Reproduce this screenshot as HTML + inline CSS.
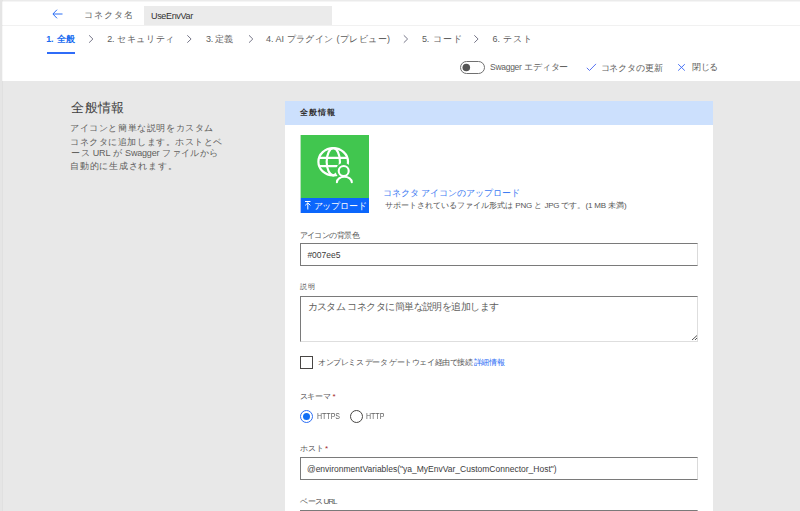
<!DOCTYPE html>
<html><head><meta charset="utf-8">
<style>
*{margin:0;padding:0;box-sizing:border-box}
html,body{width:800px;height:511px;overflow:hidden;background:#fff}
body{font-family:"Liberation Sans",sans-serif;position:relative;color:#323130}
.a{position:absolute;white-space:nowrap;line-height:1}
.inp{border:1px solid #7a7a7a;border-right-color:#dadada;background:#fff}
.ta{border:1px solid #7a7a7a;border-right-color:#dedede;border-bottom-color:#dedede;background:#fff}
</style></head><body>
<div class="a" style="left:0;top:0;width:800px;height:1px;background:#ebebeb"></div>
<div class="a" style="left:0;top:1px;width:800px;height:1px;background:#f5f5f5"></div>
<div class="a" style="left:2px;top:25px;width:798px;height:1px;background:#f1f1f1"></div>
<div class="a" style="left:2px;top:81px;width:798px;height:430px;background:#e8e8e8"></div>
<div class="a" style="left:0;top:0;width:2px;height:511px;background:#e5e5e5"></div>
<div class="a" style="left:2px;top:0;width:1px;height:511px;background:rgba(0,0,0,0.03)"></div>
<svg class="a" style="left:52px;top:9px" width="11" height="10" viewBox="0 0 11 10"><path d="M10.5 5H1M5 0.7L0.9 5 5 9.3" fill="none" stroke="#2b6ef5" stroke-width="1"/></svg>
<div class="a" style="left:144px;top:6px;width:188px;height:19px;background:#ebebeb"></div>
<div class="a" style="left:47px;top:52px;width:28px;height:2px;background:#2f6cf8"></div>
<svg class="a" style="left:0;top:0" width="800" height="60" viewBox="0 0 800 60"><path d="M89.10 35.3L92.90 39L89.10 42.7" fill="none" stroke="#66667a" stroke-width="0.9"/><path d="M187.30 35.3L191.10 39L187.30 42.7" fill="none" stroke="#66667a" stroke-width="0.9"/><path d="M249.00 35.3L252.80 39L249.00 42.7" fill="none" stroke="#66667a" stroke-width="0.9"/><path d="M403.80 35.3L407.60 39L403.80 42.7" fill="none" stroke="#66667a" stroke-width="0.9"/><path d="M474.30 35.3L478.10 39L474.30 42.7" fill="none" stroke="#66667a" stroke-width="0.9"/></svg>



<div class="a" style="left:285px;top:101px;width:428px;height:410px;background:#fff"></div>
<div class="a" style="left:285px;top:101px;width:428px;height:24px;background:#cce0fd"></div>
<div class="a" style="left:300px;top:135px;width:69px;height:63px;background:#41c64f"></div><div class="a" style="left:300px;top:135px;width:1px;height:63px;background:#b5e3b9"></div>
<svg class="a" style="left:310px;top:140px" width="50" height="50" viewBox="0 0 50 50">
<defs><mask id="m"><rect width="50" height="50" fill="#fff"/><circle cx="33.7" cy="31" r="8"/><ellipse cx="34.3" cy="43" rx="10.5" ry="8.5"/></mask></defs>
<g fill="none" stroke="#fff" stroke-width="2.2" mask="url(#m)">
<ellipse cx="23.2" cy="21.75" rx="14.8" ry="13.55"/>
<ellipse cx="23.3" cy="21.75" rx="6.65" ry="13.55"/>
<path d="M9 17.8H37.5M9 26.2H37.5"/>
</g>
<g fill="none" stroke="#fff" stroke-width="2.1" stroke-linecap="round">
<circle cx="33.7" cy="31" r="5"/>
<path d="M26.9 42.2A7.45 5.5 0 0 1 41.8 42.2"/>
</g>
</svg>
<div class="a" style="left:300px;top:198px;width:69px;height:15px;background:#0b66fc"></div><div class="a" style="left:300px;top:198px;width:1px;height:15px;background:#b3c3f5"></div>
<svg class="a" style="left:304px;top:200px" width="8" height="11" viewBox="0 0 8 11"><path d="M1 1.5H6.5M3.8 2.8V9.5M1.2 5.4L3.8 2.8 6.4 5.4" fill="none" stroke="#fff" stroke-width="1"/></svg>
<div class="a inp" style="left:300px;top:243px;width:398px;height:23px"></div>
<div class="a ta" style="left:300px;top:296px;width:398px;height:46px"></div>
<svg class="a" style="left:690px;top:334px" width="8" height="7" viewBox="0 0 8 7"><path d="M2 6L7 1.5M5 6L7 4" fill="none" stroke="#555" stroke-width="1"/></svg>
<div class="a" style="left:300px;top:356px;width:13px;height:13px;border:1px solid #484644"></div>
<div class="a" style="left:300px;top:410px;width:13px;height:13px;border:1px solid #2b6ef5;border-radius:50%"></div>
<div class="a" style="left:303px;top:413px;width:7px;height:7px;border-radius:50%;background:#106ef5"></div>
<div class="a" style="left:350px;top:410px;width:13px;height:13px;border:1px solid #484644;border-radius:50%"></div>
<div class="a inp" style="left:300px;top:457px;width:398px;height:23px"></div>
<div class="a inp" style="left:300px;top:510px;width:398px;height:23px"></div>
<svg class="a" style="left:0;top:0" width="800" height="80" viewBox="0 0 800 80">
<rect x="460.5" y="61.5" width="24" height="12" rx="6" fill="none" stroke="#707070" stroke-width="1"/>
<circle cx="466.3" cy="67.5" r="3.8" fill="#555"/>
<path d="M586.8 67.8L589.5 70.5 596 63.9" fill="none" stroke="#4f6cf2" stroke-width="0.95"/>
<path d="M678.2 64.2L684.8 70.6M684.8 64.2L678.2 70.6" fill="none" stroke="#3f6cf5" stroke-width="0.95"/>
</svg>

<div class="a" id="cname" style="left:84.00px;top:11.45px;font-size:9px;color:#605e5c;letter-spacing:-0.200px;width:48.50px;text-align:justify;text-align-last:justify">コネクタ名</div>
<div class="a" id="useenv" style="left:151.00px;top:12.00px;font-size:9px;color:#323130;letter-spacing:-0.332px">UseEnvVar</div>
<div class="a" id="tab1" style="left:46.20px;top:35.25px;font-size:9px;color:#1a6cf0;letter-spacing:-0.200px;width:28.90px;text-align:justify;text-align-last:justify;font-weight:bold">1. 全般</div>
<div class="a" id="tab2" style="left:107.20px;top:34.75px;font-size:9px;color:#5c5c5c;letter-spacing:-0.200px;width:66.70px;text-align:justify;text-align-last:justify">2. セキュリティ</div>
<div class="a" id="tab3" style="left:206.00px;top:34.75px;font-size:9px;color:#5c5c5c;letter-spacing:-0.200px;width:27.10px;text-align:justify;text-align-last:justify">3. 定義</div>
<div class="a" id="tab4" style="left:266.10px;top:34.75px;font-size:9px;color:#5c5c5c;letter-spacing:-0.200px;width:123.70px;text-align:justify;text-align-last:justify">4. AI プラグイン (プレビュー)</div>
<div class="a" id="tab5" style="left:421.90px;top:34.75px;font-size:9px;color:#5c5c5c;letter-spacing:-0.200px;width:39.50px;text-align:justify;text-align-last:justify">5. コード</div>
<div class="a" id="tab6" style="left:492.60px;top:34.75px;font-size:9px;color:#5c5c5c;letter-spacing:-0.200px;width:39.10px;text-align:justify;text-align-last:justify">6. テスト</div>
<div class="a" id="swag" style="left:490.10px;top:62.50px;font-size:8.5px;color:#605e5c;letter-spacing:-0.300px;width:78.10px;text-align:justify;text-align-last:justify">Swagger エディター</div>
<div class="a" id="upd" style="left:600.50px;top:63.50px;font-size:9px;color:#605e5c;letter-spacing:-0.200px;width:62.10px;text-align:justify;text-align-last:justify">コネクタの更新</div>
<div class="a" id="close" style="left:692.00px;top:62.50px;font-size:9px;color:#605e5c;letter-spacing:-0.500px;width:25.70px;text-align:justify;text-align-last:justify">閉じる</div>
<div class="a" id="head" style="left:71.10px;top:101.05px;font-size:13px;color:#3f3f3f;letter-spacing:-0.200px;width:53.10px;text-align:justify;text-align-last:justify">全般情報</div>
<div class="a" id="p1" style="left:70.10px;top:124.05px;font-size:9px;color:#605e5c;letter-spacing:-0.200px;width:143.10px;text-align:justify;text-align-last:justify">アイコンと簡単な説明をカスタム</div>
<div class="a" id="p2" style="left:70.10px;top:137.75px;font-size:9px;color:#605e5c;letter-spacing:-0.200px;width:152.10px;text-align:justify;text-align-last:justify">コネクタに追加します。ホストとベ</div>
<div class="a" id="p3" style="left:71.10px;top:149.35px;font-size:9px;color:#605e5c;letter-spacing:-0.200px;width:146.90px;text-align:justify;text-align-last:justify">ース URL が Swagger ファイルから</div>
<div class="a" id="p4" style="left:70.10px;top:162.30px;font-size:9px;color:#605e5c;letter-spacing:-0.200px;width:106.30px;text-align:justify;text-align-last:justify">自動的に生成されます。</div>
<div class="a" id="chead" style="left:299.70px;top:109.45px;font-size:8px;color:#323130;letter-spacing:0.000px;width:35.50px;text-align:justify;text-align-last:justify;font-weight:bold">全般情報</div>
<div class="a" id="upl" style="left:313.50px;top:201.50px;font-size:9px;color:#fff;letter-spacing:-0.200px;width:53.50px;text-align:justify;text-align-last:justify">アップロード</div>
<div class="a" id="link" style="left:383.40px;top:189.25px;font-size:8.5px;color:#3a78f2;letter-spacing:-0.350px;width:135.90px;text-align:justify;text-align-last:justify">コネクタ アイコンのアップロード</div>
<div class="a" id="ftype" style="left:385.00px;top:201.95px;font-size:8px;color:#565656;letter-spacing:-0.250px;width:241.50px;text-align:justify;text-align-last:justify">サポートされているファイル形式は PNG と JPG です。(1 MB 未満)</div>
<div class="a" id="lbg" style="left:299.50px;top:232.00px;font-size:8px;color:#565656;letter-spacing:-0.800px;width:59.50px;text-align:justify;text-align-last:justify">アイコンの背景色</div>
<div class="a" id="vbg" style="left:307.40px;top:251.45px;font-size:8.5px;color:#3c3c3c;letter-spacing:0.000px">#007ee5</div>
<div class="a" id="ldesc" style="left:300.10px;top:283.20px;font-size:7px;color:#565656;letter-spacing:0.000px;width:15.00px;text-align:justify;text-align-last:justify">説明</div>
<div class="a" id="vdesc" style="left:307.50px;top:302.00px;font-size:10px;color:#605e5c;letter-spacing:-0.650px;width:191.00px;text-align:justify;text-align-last:justify">カスタム コネクタに簡単な説明を追加します</div>
<div class="a" id="chk" style="left:318.00px;top:358.50px;font-size:8px;color:#565656;letter-spacing:-0.850px;width:185.70px;text-align:justify;text-align-last:justify">オンプレミス データ ゲートウェイ経由で接続 <span style="color:#2b6ef5">詳細情報</span></div>
<div class="a" id="lsch" style="left:299.50px;top:392.80px;font-size:8px;color:#565656;letter-spacing:-0.600px;width:35.50px;text-align:justify;text-align-last:justify">スキーマ <span style="color:#a4262c">*</span></div>
<div class="a" id="rad1" style="left:316.60px;top:411.95px;font-size:9px;color:#606060;letter-spacing:0.000px;transform:scaleX(0.78);transform-origin:0 0">HTTPS</div>
<div class="a" id="rad2" style="left:366.00px;top:411.95px;font-size:9px;color:#606060;letter-spacing:0.000px;transform:scaleX(0.78);transform-origin:0 0">HTTP</div>
<div class="a" id="lhost" style="left:300.40px;top:444.75px;font-size:8px;color:#565656;letter-spacing:-0.800px;width:26.90px;text-align:justify;text-align-last:justify">ホスト <span style="color:#a4262c">*</span></div>
<div class="a" id="vhost" style="left:307.00px;top:464.65px;font-size:8.5px;color:#3c3c3c;letter-spacing:0.000px">@environmentVariables("ya_MyEnvVar_CustomConnector_Host")</div>
<div class="a" id="lbase" style="left:300.40px;top:497.60px;font-size:8px;color:#565656;letter-spacing:-1.000px;width:36.00px;text-align:justify;text-align-last:justify">ベース URL</div>
</body></html>
